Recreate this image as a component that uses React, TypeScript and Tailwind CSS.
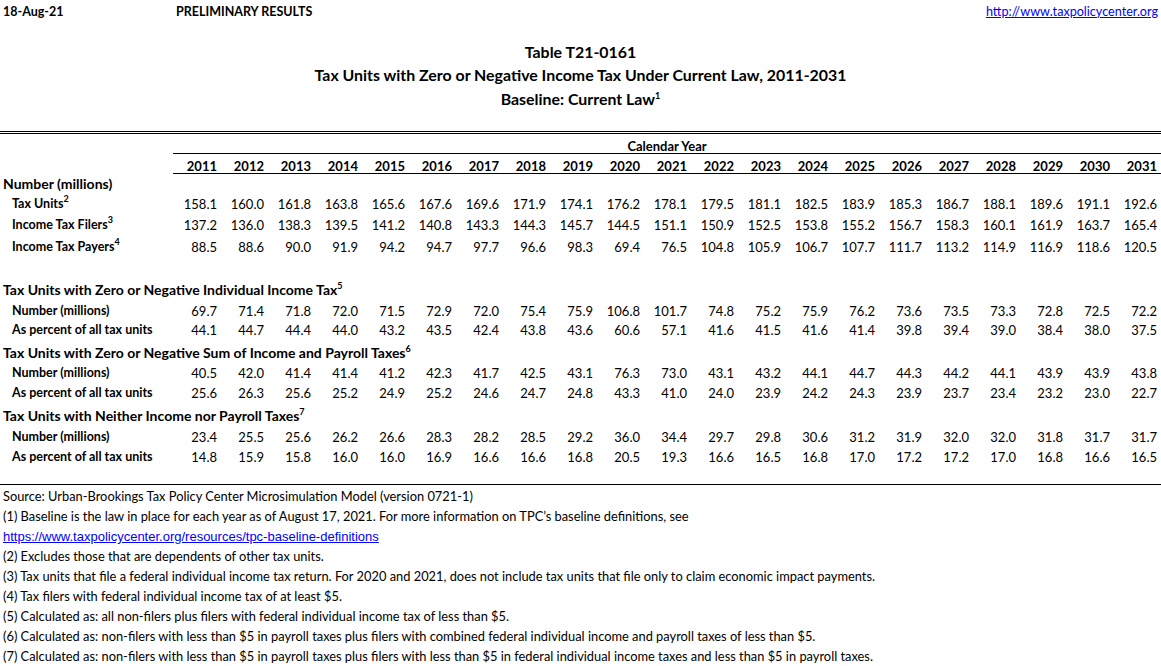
import React from "react";

type Row = {
  label: string;
  sup?: string;
  kind: "head" | "sub" | "blank";
  h: string; // row height class
  values?: string[];
};

const years = Array.from({ length: 21 }, (_, i) => String(2011 + i));

const rows: Row[] = [
  { label: "Number (millions)", kind: "head", h: "h-[19px]" },
  {
    label: "Tax Units",
    sup: "2",
    kind: "sub",
    h: "h-[20px]",
    values: "158.1 160.0 161.8 163.8 165.6 167.6 169.6 171.9 174.1 176.2 178.1 179.5 181.1 182.5 183.9 185.3 186.7 188.1 189.6 191.1 192.6".split(" "),
  },
  {
    label: "Income Tax Filers",
    sup: "3",
    kind: "sub",
    h: "h-[21px]",
    values: "137.2 136.0 138.3 139.5 141.2 140.8 143.3 144.3 145.7 144.5 151.1 150.9 152.5 153.8 155.2 156.7 158.3 160.1 161.9 163.7 165.4".split(" "),
  },
  {
    label: "Income Tax Payers",
    sup: "4",
    kind: "sub",
    h: "h-[22px]",
    values: "88.5 88.6 90.0 91.9 94.2 94.7 97.7 96.6 98.3 69.4 76.5 104.8 105.9 106.7 107.7 111.7 113.2 114.9 116.9 118.6 120.5".split(" "),
  },
  { label: "", kind: "blank", h: "h-[21px]" },
  { label: "Tax Units with Zero or Negative Individual Income Tax", sup: "5", kind: "head", h: "h-[22px]" },
  {
    label: "Number (millions)",
    kind: "sub",
    h: "h-[21px]",
    values: "69.7 71.4 71.8 72.0 71.5 72.9 72.0 75.4 75.9 106.8 101.7 74.8 75.2 75.9 76.2 73.6 73.5 73.3 72.8 72.5 72.2".split(" "),
  },
  {
    label: "As percent of all tax units",
    kind: "sub",
    h: "h-[19px]",
    values: "44.1 44.7 44.4 44.0 43.2 43.5 42.4 43.8 43.6 60.6 57.1 41.6 41.5 41.6 41.4 39.8 39.4 39.0 38.4 38.0 37.5".split(" "),
  },
  { label: "Tax Units with Zero or Negative Sum of Income and Payroll Taxes", sup: "6", kind: "head", h: "h-[23px]" },
  {
    label: "Number (millions)",
    kind: "sub",
    h: "h-[20px]",
    values: "40.5 42.0 41.4 41.4 41.2 42.3 41.7 42.5 43.1 76.3 73.0 43.1 43.2 44.1 44.7 44.3 44.2 44.1 43.9 43.9 43.8".split(" "),
  },
  {
    label: "As percent of all tax units",
    kind: "sub",
    h: "h-[20px]",
    values: "25.6 26.3 25.6 25.2 24.9 25.2 24.6 24.7 24.8 43.3 41.0 24.0 23.9 24.2 24.3 23.9 23.7 23.4 23.2 23.0 22.7".split(" "),
  },
  { label: "Tax Units with Neither Income nor Payroll Taxes", sup: "7", kind: "head", h: "h-[23px]" },
  {
    label: "Number (millions)",
    kind: "sub",
    h: "h-[21px]",
    values: "23.4 25.5 25.6 26.2 26.6 28.3 28.2 28.5 29.2 36.0 34.4 29.7 29.8 30.6 31.2 31.9 32.0 32.0 31.8 31.7 31.7".split(" "),
  },
  {
    label: "As percent of all tax units",
    kind: "sub",
    h: "h-[20px]",
    values: "14.8 15.9 15.8 16.0 16.0 16.9 16.6 16.6 16.8 20.5 19.3 16.6 16.5 16.8 17.0 17.2 17.2 17.0 16.8 16.6 16.5".split(" "),
  },
];

const notes = [
  "Source: Urban-Brookings Tax Policy Center Microsimulation Model (version 0721-1)",
  "(1) Baseline is the law in place for each year as of August 17, 2021. For more information on TPC’s baseline definitions, see",
  "LINK",
  "(2) Excludes those that are dependents of other tax units.",
  "(3) Tax units that file a federal individual income tax return. For 2020 and 2021, does not include tax units that file only to claim economic impact payments.",
  "(4) Tax filers with federal individual income tax of at least $5.",
  "(5) Calculated as: all non-filers plus filers with federal individual income tax of less than $5.",
  "(6) Calculated as: non-filers with less than $5 in payroll taxes plus filers with combined federal individual income and payroll taxes of less than $5.",
  "(7) Calculated as: non-filers with less than $5 in payroll taxes plus filers with less than $5 in federal individual income taxes and less than $5 in payroll taxes.",
];

function Sup({ n }: { n: string }) {
  return <sup className="text-[9px] -top-[6px]">{n}</sup>;
}

export default function App() {
  return (
    <div className="w-[1161px] h-[666px] overflow-hidden bg-white text-black font-['Lato','Open_Sans',sans-serif]">
      {/* top strip */}
      <div className="flex items-center h-[24px] text-[12.5px] font-bold">
        <div className="w-[176px] pl-[3px]">18-Aug-21</div>
        <div className="flex-1">PRELIMINARY RESULTS</div>
        <a href="#" className="pr-[3px] font-normal text-[12.6px] text-[#0000ff] underline">
          http://www.taxpolicycenter.org
        </a>
      </div>

      {/* titles */}
      <div className="mt-[16px] flex flex-col items-center text-[15.9px] font-bold">
        <div className="h-[23px] leading-[23px]">Table T21-0161</div>
        <div className="h-[23px] leading-[23px]">Tax Units with Zero or Negative Income Tax Under Current Law, 2011-2031</div>
        <div className="h-[25px] leading-[25px]">
          Baseline: Current Law<Sup n="1" />
        </div>
      </div>

      {/* double rule */}
      <div className="mt-[20px] h-[3px] border-y border-black" />

      {/* column headings */}
      <div className="flex h-[20px]">
        <div className="w-[173px]" />
        <div className="flex-1 border-b border-black flex items-end justify-center text-[13px] font-bold leading-[14px]">
          Calendar Year
        </div>
      </div>
      <div className="flex h-[20px]">
        <div className="w-[173px]" />
        <div className="flex-1 border-b border-black flex text-[13px] font-bold leading-[14px]">
          {years.map((y) => (
            <div key={y} className="w-[47px] flex items-end justify-end pr-[3px]">
              {y}
            </div>
          ))}
        </div>
      </div>

      {/* body */}
      {rows.map((r, i) => (
        <div key={i} className={`flex items-end ${r.h}`}>
          <div
            className={
              r.kind === "head"
                ? "w-[173px] shrink-0 pl-[3px] whitespace-nowrap text-[14px] font-bold leading-[18px]"
                : "w-[173px] shrink-0 pl-[12px] whitespace-nowrap text-[12.5px] font-bold leading-[18px]"
            }
          >
            {r.label}
            {r.sup && <Sup n={r.sup} />}
          </div>
          {r.values && (
            <div className="flex text-[13px] leading-[18px]">
              {r.values.map((v, j) => (
                <div key={j} className="w-[47px] text-right pr-[3px]">
                  {v}
                </div>
              ))}
            </div>
          )}
        </div>
      ))}

      {/* bottom rule */}
      <div className="h-[19px] border-b border-black" />

      {/* notes */}
      <div className="pt-[1px] text-[12.85px]">
        {notes.map((n, i) =>
          n === "LINK" ? (
            <div key={i} className="h-[20px] leading-[20px] pl-[3px]">
              <a href="#" className="text-[#0000ff] underline font-['Liberation_Sans',Arial,sans-serif] text-[13px]">
                https://www.taxpolicycenter.org/resources/tpc-baseline-definitions
              </a>
            </div>
          ) : (
            <div key={i} className="h-[20px] leading-[20px] pl-[3px] whitespace-nowrap">
              {n}
            </div>
          )
        )}
      </div>
    </div>
  );
}
